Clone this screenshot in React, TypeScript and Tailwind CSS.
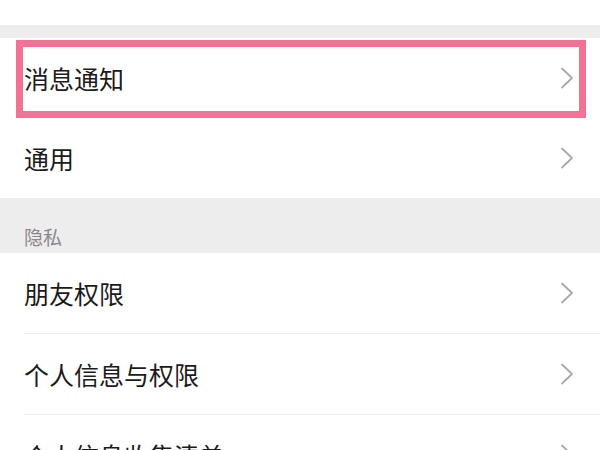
import React from 'react';

const font = { fontFamily: '"Noto Sans CJK SC", "Noto Sans", sans-serif' };

function Chevron() {
  return (
    <svg width="14" height="22" viewBox="0 0 14 22" fill="none" className="shrink-0">
      <polyline
        points="2,1.5 12,11 2,20.5"
        stroke="#a8a8a8"
        strokeWidth="1.8"
        strokeLinecap="round"
        strokeLinejoin="round"
      />
    </svg>
  );
}

interface RowProps {
  label: string;
  divider?: boolean;
  highlight?: boolean;
}

function Row({ label, divider = false, highlight = false }: RowProps) {
  return (
    <div className="relative bg-white">
      <div className="h-[80px] flex items-center justify-between pl-6 pr-[26px]">
        <span className="text-[25px] leading-none text-[#1b1b1b]">{label}</span>
        <Chevron />
      </div>
      {divider && <div className="h-px ml-6 bg-[#ededed]" />}
      {highlight && (
        <div className="absolute left-4 top-[2px] w-[570px] h-[78px] border-[7px] border-[#f47196]" />
      )}
    </div>
  );
}

export default function App() {
  return (
    <div className="w-[600px] h-[450px] overflow-hidden bg-white flex flex-col" style={font}>
      <div className="h-[25px] bg-white shrink-0" />
      <div className="h-[13px] bg-[#ededed] shrink-0" />
      <Row label="消息通知" highlight />
      <Row label="通用" />
      <div className="h-[55px] bg-[#ededed] shrink-0 flex items-end pl-6 pb-[7px]">
        <span className="text-[19px] leading-none text-[#8a8a8a]">隐私</span>
      </div>
      <Row label="朋友权限" divider />
      <Row label="个人信息与权限" divider />
      <Row label="个人信息收集清单" />
    </div>
  );
}
